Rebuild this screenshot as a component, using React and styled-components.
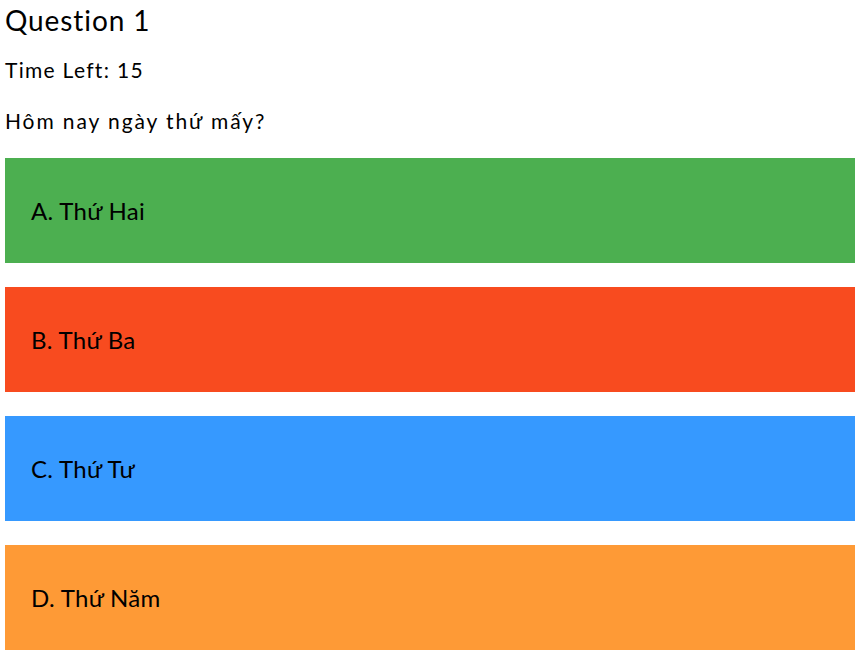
import React from "react";
import styled, { createGlobalStyle } from "styled-components";

const Global = createGlobalStyle`
  html, body { margin: 0; padding: 0; background: #ffffff; }
  body { font-family: Lato, "Open Sans", sans-serif; color: #000; }
`;

const Page = styled.main`
  padding: 3px 0 0 5px;
  display: flex;
  flex-direction: column;
`;

const Title = styled.h1`
  margin: 0;
  font-size: 28px;
  line-height: 34px;
  font-weight: 400;
  letter-spacing: 0.9px;
`;

const Timer = styled.p`
  margin: 21px 0 0;
  font-size: 21px;
  line-height: 24px;
  letter-spacing: 1.3px;
`;

const QuestionText = styled.p`
  margin: 27px 0 0;
  font-size: 21px;
  line-height: 24px;
  letter-spacing: 1.9px;
`;

const Answers = styled.div`
  margin-top: 25px;
  display: flex;
  flex-direction: column;
  gap: 24px;
`;

const Answer = styled.button`
  display: flex;
  align-items: center;
  height: 105px;
  padding: 0 0 0 26px;
  border: none;
  background: ${(p) => p.$color};
  font-family: inherit;
  font-size: 24px;
  letter-spacing: 0.3px;
  color: #000;
  text-align: left;
  cursor: pointer;
`;

const answers = [
  { label: "A. Thứ Hai", color: "#4caf50" },
  { label: "B. Thứ Ba", color: "#f84b1f" },
  { label: "C. Thứ Tư", color: "#3699ff" },
  { label: "D. Thứ Năm", color: "#fe9a36" },
];

export default function App() {
  return (
    <>
      <Global />
      <Page>
        <Title>Question 1</Title>
        <Timer>Time Left: 15</Timer>
        <QuestionText>Hôm nay ngày thứ mấy?</QuestionText>
        <Answers>
          {answers.map((a) => (
            <Answer key={a.label} $color={a.color}>
              {a.label}
            </Answer>
          ))}
        </Answers>
      </Page>
    </>
  );
}
